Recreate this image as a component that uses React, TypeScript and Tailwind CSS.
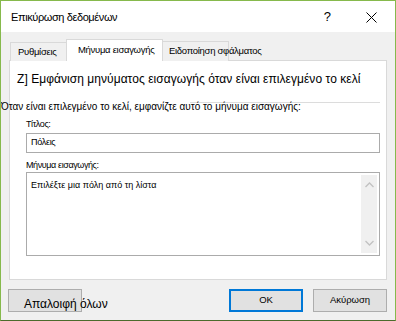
import React from "react";

const Chevron = ({ up }: { up?: boolean }) => (
  <svg width="9" height="6" viewBox="0 0 9 6" className="block">
    <path d={up ? "M0.5 5 L4.5 1 L8.5 5" : "M0.5 1 L4.5 5 L8.5 1"} fill="none" stroke="#c2c2c2" strokeWidth="1.3" />
  </svg>
);

export default function App() {
  return (
    <div
      className="w-[396px] h-[321px] border border-[#86b94c] border-b-[#4c6b2c] bg-[#f0f0f0] flex flex-col text-[12px] text-black overflow-hidden"
      style={{ fontFamily: '"Liberation Sans", Arial, sans-serif' }}
    >
      {/* Title bar */}
      <div className="h-[31px] bg-white flex items-center shrink-0">
        <span className="ml-[10px] text-[11px] tracking-[-0.4px] leading-[16px]">Επικύρωση δεδομένων</span>
        <span className="ml-auto mr-[35px] text-[13px] leading-[16px]">?</span>
        <svg width="11" height="11" viewBox="0 0 11 11" className="mr-[18px] mt-[1px]">
          <path d="M0.5 0.5 L10.5 10.5 M10.5 0.5 L0.5 10.5" stroke="#000" strokeWidth="1" />
        </svg>
      </div>

      {/* Tabs */}
      <div className="mt-[7px] ml-[9px] flex items-end h-[22px] relative z-10 -mb-px">
        <div className="w-[56px] h-[19px] border border-[#d9d9d9] border-b-0 border-r-0 bg-[#f0f0f0] flex items-center pl-[7px] text-[9.5px] tracking-[-0.3px] whitespace-nowrap">
          Ρυθμίσεις
        </div>
        <div className="w-[97px] h-[22px] border border-[#d9d9d9] border-b-0 bg-white flex items-center pl-[11px] pb-[1px] text-[9.5px] tracking-[-0.3px] whitespace-nowrap">
          Μήνυμα εισαγωγής
        </div>
        <div className="w-[66px] h-[20px] border border-[#d9d9d9] border-b-0 border-l-0 bg-[#f0f0f0] flex items-center pl-[6px] text-[9.5px] tracking-[-0.3px] whitespace-nowrap overflow-visible">
          Ειδοποίηση σφάλματος
        </div>
      </div>

      {/* Panel */}
      <div className="ml-[8px] w-[378px] h-[220px] border border-[#d9d9d9] bg-white flex flex-col shrink-0">
        <div className="mt-[10px] ml-[7px] h-[16px] leading-[16px] text-[12px] tracking-[0.05px] whitespace-nowrap">
          Z] Εμφάνιση μηνύματος εισαγωγής όταν είναι επιλεγμένο το κελί
        </div>
        <div className="mt-[10px] ml-[-9px] h-[16px] relative">
          <div className="absolute left-[189px] right-[6px] top-[5px] border-t border-[#dcdcdc]" />
          <span className="relative text-[10px] leading-[16px] whitespace-nowrap">
            Όταν είναι επιλεγμένο το κελί, εμφανίζτε αυτό το μήνυμα εισαγωγής:
          </span>
        </div>
        <div className="mt-[3px] ml-[16px] h-[16px] leading-[16px] text-[9px] tracking-[-0.4px]">Τίτλος:</div>
        <div className="mt-[1px] ml-[16px] w-[354px] h-[20px] border border-[#ababab] flex items-center pl-[4px] text-[9px] tracking-[-0.3px]">
          Πόλεις
        </div>
        <div className="mt-[5px] ml-[16px] h-[14px] leading-[14px] text-[9px] tracking-[-0.4px]">Μήνυμα εισαγωγής:</div>
        <div className="ml-[16px] w-[354px] h-[84px] border border-[#ababab] flex">
          <div className="flex-1 pl-[4px] pt-[5px] text-[9px] leading-[14px]">Επιλέξτε μια πόλη από τη λίστα</div>
          <div className="w-[16px] mt-[2px] mb-[2px] mr-[2px] bg-[#f0f0f0] flex flex-col items-center justify-between py-[7px]">
            <Chevron up />
            <Chevron />
          </div>
        </div>
      </div>

      {/* Buttons */}
      <div className="mt-[9px] flex h-[23px]">
        <div className="ml-[7px] w-[74px] h-[23px] border border-[#adadad] bg-[#e1e1e1] flex items-end pl-[15px] text-[12px] leading-[16px] whitespace-nowrap">
          <span className="mb-[-1px]">Απαλοιφή όλων</span>
        </div>
        <div className="ml-[147px] w-[74px] h-[23px] border-2 border-[#0078d7] bg-[#e1e1e1] flex items-center justify-center text-[9.5px]">
          OK
        </div>
        <div className="ml-[10px] w-[74px] h-[23px] border border-[#adadad] bg-[#e1e1e1] flex items-center justify-center text-[9.5px]">
          Ακύρωση
        </div>
      </div>
    </div>
  );
}
